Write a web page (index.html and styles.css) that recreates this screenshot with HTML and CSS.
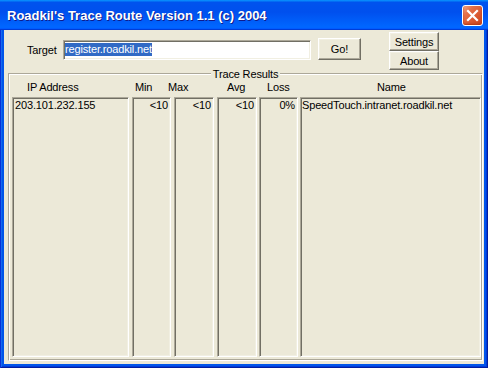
FILE: index.html
```html
<!DOCTYPE html>
<html>
<head>
<meta charset="utf-8">
<link rel="stylesheet" href="styles.css">
</head>
<body>
<div class="window">
  <div class="titlebar">
    <span class="title">Roadkil's Trace Route Version 1.1 (c) 2004</span>
    <button class="close" aria-label="Close">
      <svg width="19" height="19" viewBox="0 0 19 19"><path d="M5 5L14 14M14 5L5 14" stroke="#fff" stroke-width="2.2" stroke-linecap="square"/></svg>
    </button>
  </div>
  <div class="client">
    <div class="toprow">
      <span class="target-label">Target</span>
      <div class="edit"><span class="sel">register.roadkil.net</span></div>
      <button class="btn go">Go!</button>
      <div class="btncol">
        <button class="btn side">Settings</button>
        <button class="btn side">About</button>
      </div>
    </div>
    <div class="group">
      <div class="group-title"><span>Trace Results</span></div>
      <div class="group-body">
        <div class="heads">
          <span class="h h-ip">IP Address</span>
          <span class="h h-min">Min</span>
          <span class="h h-max">Max</span>
          <span class="h h-avg">Avg</span>
          <span class="h h-loss">Loss</span>
          <span class="h h-name">Name</span>
        </div>
        <div class="cols">
          <div class="col c-ip"><div class="cell">203.101.232.155</div></div>
          <div class="col c-min"><div class="cell num">&lt;10</div></div>
          <div class="col c-max"><div class="cell num">&lt;10</div></div>
          <div class="col c-avg"><div class="cell num">&lt;10</div></div>
          <div class="col c-loss"><div class="cell num">0%</div></div>
          <div class="col c-name"><div class="cell name">SpeedTouch.intranet.roadkil.net</div></div>
        </div>
      </div>
    </div>
  </div>
</div>
</body>
</html>
```

FILE: styles.css
```css
* { box-sizing: border-box; }
html, body { margin: 0; padding: 0; }
body {
  width: 488px;
  height: 368px;
  overflow: hidden;
  font-family: "Liberation Sans", Arial, sans-serif;
  font-size: 11px;
  letter-spacing: -0.15px;
  color: #000;
  background: #0055ea;
}
.window {
  width: 488px;
  height: 368px;
  background: #0055ea;
  box-shadow: inset 1px 0 0 #0831d9, inset -1px 0 0 #001ea0, inset 0 -1px 0 #001ea0, inset 2px 0 0 #166aee, inset -2px 0 0 #003bda, inset 0 -2px 0 #003bda;
  display: flex;
  flex-direction: column;
}
.titlebar {
  height: 30px;
  display: flex;
  align-items: flex-start;
  justify-content: space-between;
  padding: 0 5px 0 7px;
  background: linear-gradient(180deg, #0997ff, #0053ee 8%, #0050ee 40%, #0066ff 88%, #0066ff 93%, #005bff 95%, #003dd7 96%, #003dd7);
}
.title {
  margin-top: 2px;
  line-height: 28px;
  font-size: 13px;
  font-weight: bold;
  letter-spacing: 0;
  color: #fff;
  text-shadow: 1px 1px 0 #0f1b8c;
  white-space: nowrap;
}
.close {
  margin: 5px 0 0 0;
  padding: 0;
  width: 21px;
  height: 21px;
  border: 1px solid #fff;
  border-radius: 3px;
  background: linear-gradient(135deg, #f3a98a 0%, #e4714a 28%, #d9572f 65%, #c8431e 100%);
  box-shadow: inset 0 -1px 2px #b33a14;
  display: flex;
  align-items: center;
  justify-content: center;
}
.close svg { display: block; }
.client {
  margin: 0 4px 4px 4px;
  width: 480px;
  height: 334px;
  background: #ece9d8;
}
.toprow {
  display: flex;
  align-items: flex-start;
  height: 40px;
}
.target-label {
  margin-left: 23px;
  margin-top: 13px;
  width: 36px;
  line-height: 14px;
}
.edit {
  margin-top: 10px;
  width: 248px;
  height: 20px;
  background: #fff;
  border: 1px solid;
  border-color: #aca899 #fff #fff #aca899;
  box-shadow: inset 1px 1px 0 #716f64, inset -1px -1px 0 #f1efe2;
  padding: 2px 0 0 1px;
}
.sel {
  display: inline-block;
  line-height: 13px;
  background: #316ac5;
  color: #fff;
  white-space: nowrap;
}
.btn {
  margin: 0;
  padding: 0;
  font-family: inherit;
  font-size: 11px;
  letter-spacing: -0.15px;
  color: #000;
  background: #ece9d8;
  border: 1px solid;
  border-color: #fff #716f64 #716f64 #fff;
  box-shadow: inset -1px -1px 0 #aca899, inset 1px 1px 0 #f1efe2;
  text-align: center;
}
.go {
  margin-left: 7px;
  margin-top: 8px;
  width: 43px;
  height: 22px;
}
.btncol {
  margin-left: 28px;
  margin-top: 2px;
  width: 50px;
  display: flex;
  flex-direction: column;
}
.side {
  width: 50px;
  height: 19px;
}
.group {
  margin-left: 4px;
  width: 475px;
}
.group-title {
  display: flex;
  height: 8px;
}
.group-title::before,
.group-title::after {
  content: "";
  flex: 1;
  align-self: flex-end;
  height: 4px;
  border-top: 1px solid #aca899;
}
.group-title::before {
  border-left: 1px solid #aca899;
  box-shadow: inset 1px 1px 0 #fff;
}
.group-title::after {
  border-right: 1px solid #fff;
  box-shadow: inset 0 1px 0 #fff, inset -1px 0 0 #aca899;
}
.group-title span {
  padding: 0 2px;
  line-height: 8px;
  white-space: nowrap;
}
.group-body {
  border-left: 1px solid #aca899;
  border-right: 1px solid #fff;
  border-bottom: 1px solid #fff;
  box-shadow: inset 1px 0 0 #fff, inset -1px 0 0 #aca899, inset 0 -1px 0 #aca899;
  padding-bottom: 3px;
}
.heads {
  display: flex;
  padding-left: 18px;
  padding-top: 3px;
  line-height: 13px;
  white-space: nowrap;
}
.h-ip { width: 108px; }
.h-min { width: 33px; }
.h-max { width: 59px; }
.h-avg { width: 40px; }
.h-loss { width: 110px; }
.cols {
  display: flex;
  margin-top: 3px;
  padding-left: 3px;
}
.col {
  height: 260px;
  border: 1px solid;
  border-color: #aca899 #fff #fff #aca899;
  box-shadow: inset 1px 1px 0 #716f64, inset -1px -1px 0 #f1efe2;
  background: #ece9d8;
}
.c-ip { width: 117px; }
.c-min { width: 39px; margin-left: 3px; }
.c-max { width: 40px; margin-left: 3px; }
.c-avg { width: 40px; margin-left: 3px; }
.c-loss { width: 39px; margin-left: 2px; }
.c-name { width: 181px; margin-left: 2px; }
.cell {
  padding: 1px 2px 0 2px;
  line-height: 13px;
  white-space: nowrap;
}
.cell.num { text-align: right; }
.cell.name { padding-left: 1px; }
```
